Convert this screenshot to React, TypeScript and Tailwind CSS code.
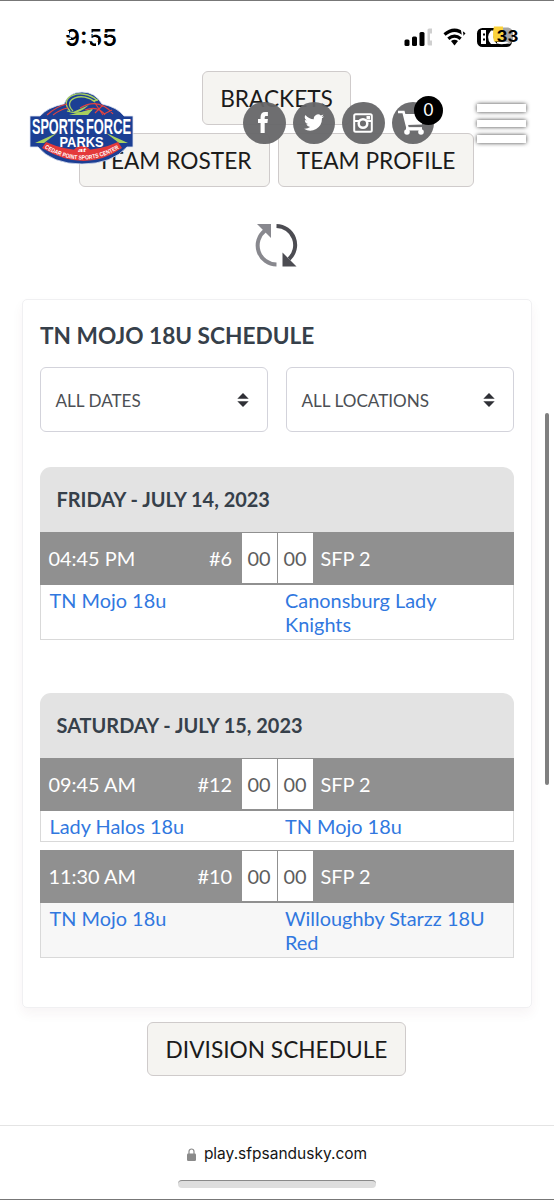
import React from "react";

type Game = {
  time: string;
  num: string;
  home: string;
  away: string;
  field: string;
  shaded?: boolean;
  tall?: boolean;
};

const friday: Game[] = [
  { time: "04:45 PM", num: "#6", home: "TN Mojo 18u", away: "Canonsburg Lady Knights", field: "SFP 2", tall: true },
];

const saturday: Game[] = [
  { time: "09:45 AM", num: "#12", home: "Lady Halos 18u", away: "TN Mojo 18u", field: "SFP 2" },
  { time: "11:30 AM", num: "#10", home: "TN Mojo 18u", away: "Willoughby Starzz 18U Red", field: "SFP 2", shaded: true, tall: true },
];

function PageButton({ label, className }: { label: string; className: string }) {
  return (
    <button
      className={`flex h-[54px] shrink-0 items-center justify-center whitespace-nowrap rounded-[6px] border-[1.5px] border-[#cfcbcb] bg-[#f5f4f1] pt-[2px] text-[22.7px] leading-none text-[#1b1b1b] ${className}`}
    >
      {label}
    </button>
  );
}

function Select({ label }: { label: string }) {
  return (
    <div className="flex h-[65px] w-[228px] items-center justify-between rounded-[6px] border-[1.5px] border-[#d3d3db] bg-white pl-[15px] pr-[18px] pt-[2px] text-[17.1px] text-[#4c4f54]">
      <span className="pt-px">{label}</span>
      <svg width="12" height="14" viewBox="0 0 12 14" className="mb-[2px]" fill="#2f3036">
        <path d="M6 0 11.7 5.8H.3z" />
        <path d="M6 14 .3 8.2h11.4z" />
      </svg>
    </div>
  );
}

function GameRow({ game }: { game: Game }) {
  return (
    <div>
      <div className="flex h-[53px] items-center bg-[#909090] text-[19.9px] text-white">
        <div className="flex w-[202px] items-center justify-between pl-[9px] pr-[9.5px]">
          <span>{game.time}</span>
          <span>{game.num}</span>
        </div>
        <div className="mb-px flex h-[50px] w-[35px] items-center justify-center bg-white pt-px text-[#5e5e5e]">00</div>
        <div className="mb-px ml-px flex h-[50px] w-[35px] items-center justify-center bg-white pt-px text-[#5e5e5e]">00</div>
        <span className="pl-[8px]">{game.field}</span>
      </div>
      <div
        className={`flex border border-t-0 border-[#d9d9d9] pl-[9px] pt-[3px] text-[19.9px] leading-[24px] text-[#3178df] ${game.tall ? "h-[55px]" : "h-[31px]"} ${game.shaded ? "bg-[#f7f7f7]" : "bg-white"}`}
      >
        <span className="w-[235.5px]">{game.home}</span>
        <span className="w-[215px]">{game.away}</span>
      </div>
    </div>
  );
}

function Day({ title, games }: { title: string; games: Game[] }) {
  return (
    <section>
      <h3 className="flex h-[65px] items-center rounded-t-[11px] bg-[#e3e3e3] pl-[17px] text-[19.95px] font-bold text-[#36404a]">
        {title}
      </h3>
      <div className="flex flex-col gap-[8px]">
        {games.map((g) => (
          <GameRow key={g.time} game={g} />
        ))}
      </div>
    </section>
  );
}

function StatusBar() {
  return (
    <svg className="block h-[70px] w-[554px] shrink-0" viewBox="0 0 554 70">
      <text x="65" y="45" fontSize="23" fontWeight="600" fontFamily="Inter, sans-serif" textLength="52" lengthAdjust="spacingAndGlyphs">9:55</text>
      <g fill="#fff">
        <path d="M64 30h5v4h-5zM70 31h4v2h-4zM64 36.500h7v1.500h-7zM88 27h3.500v12h-3.500zM91 31.500h9v1.500h-9zM92 37h6v1.500h-6zM88 41h2v4h-2zM103 31.500h12v1.500h-12zM107 37h6v1.500h-6zM96 41h2v4h-2z" />
      </g>
      <g>
        <rect x="404.500" y="38.500" width="5" height="6.500" rx="1.500" />
        <rect x="412" y="35.500" width="5" height="9.500" rx="1.500" />
        <rect x="419.500" y="31" width="5" height="14" rx="1.500" />
        <path d="M427.500 29q0-1.500 1.500-1.500h3v5h-2v7h2v5h-3q-1.500 0-1.500-1.500z" fill="#cfcfcf" />
      </g>
      <g fill="none" stroke="#000" strokeWidth="3.200">
        <path d="M444.500 33.500Q454.500 25 464.500 33.500" />
        <path d="M448.300 37.800Q454.500 32.500 460.700 37.800" />
        <path d="M451 40 454.500 44.500l3.500-4.500q-3.500-2.600-7 0z" fill="#000" stroke="none" />
        <path d="m461.500 27 1.300 8" stroke="#fff" strokeWidth="1.600" />
      </g>
      <rect x="477" y="27" width="35" height="19" rx="5.500" />
      <path d="M502 26.500h6q5 1 5 6v7l-3 3.500h-8z" fill="#a5a5a5" />
      <path d="M481 29h5v14h-5zM491 29.500q-6 7 0 13.500h6q-7-7 0-13.500zM497 41h12q-5 3.500-12 1.500z" fill="#fff" />
      <path d="M483 32.500h2v2h-2zM483 37.500h2v2h-2z" />
      <path d="M494 25.500h9v15h-9q-2-8 0-15z" fill="#fbd23c" />
      <text x="496.500" y="40.500" fontSize="16.500" fontWeight="700" fontFamily="Inter, sans-serif" textLength="22" lengthAdjust="spacingAndGlyphs">33</text>
    </svg>
  );
}

function Logo() {
  return (
    <svg width="106" height="76" viewBox="0 0 106 76">
      <path d="M35 13Q40 1 53 1t20 12Q88 16 95 25h9v31h-6Q83 73 53 73 23 73 9 56H1V25h10q8-9 24-12z" fill="#1c3f94" stroke="#dfe4f2" strokeWidth="0.800" />
      <path d="M41 20C28 6 52-4 68 9M44 20C32 8 54 0 66 11M38 20q10 4 25-1M64 10l5-1" fill="none" stroke="#a8d05f" strokeWidth="1.300" />
      <path d="M18 24Q28 15 38 13M24 24q8-6 15-7M51 17q19-11 33 6M56 19q13-5 20 5M66 12l8 12M74 14l-8 8M83 19l-8 4" fill="none" stroke="#e4433e" strokeWidth="1.100" />
      <path d="M44 21 60 14q-9 8-16 8zM40 24l24-6-5 6z" fill="#a8d05f" />
      <path d="M6 52l22-10-13 10zM99 52l-22-10 13 10z" fill="#a8d05f" />
      <path d="M17 51Q53 67 89 51l4 6Q56 83 13 57z" fill="#e4393a" />
      <path d="M44 62q1-7 9-7t9 7z" fill="#e4393a" />
      <g fill="#fff" fontFamily="'Liberation Sans', sans-serif" fontWeight="700">
        <g fontSize="22.500">
          <text x="3" y="43" textLength="52" lengthAdjust="spacingAndGlyphs">SPORTS</text>
          <text x="57" y="43" textLength="45" lengthAdjust="spacingAndGlyphs">FORCE</text>
        </g>
        <text x="30.500" y="55.500" fontSize="15.500" textLength="44" lengthAdjust="spacingAndGlyphs">PARKS</text>
        <text x="49" y="61" fontSize="5" fontStyle="italic" textLength="8" lengthAdjust="spacingAndGlyphs">at</text>
        <path id="logo-arc" d="M15.500 57Q53 80 91 57" fill="none" />
        <text fontSize="6">
          <textPath href="#logo-arc" textLength="79" lengthAdjust="spacingAndGlyphs">CEDAR POINT SPORTS CENTER</textPath>
        </text>
      </g>
    </svg>
  );
}

function Round({ children }: { children: React.ReactNode }) {
  return <div className="flex h-[42.5px] w-[42.5px] items-center justify-center rounded-full bg-[#666668]/95">{children}</div>;
}

function FloatingHeader() {
  return (
    <>
      <div className="absolute left-[29px] top-[90px]">
        <Logo />
      </div>
      <div className="absolute left-[243px] top-[100.5px] flex gap-[7px]">
        <Round>
          <svg width="11" height="21" viewBox="0 0 12 21" className="mr-[2px]" fill="#fff" preserveAspectRatio="none"><path d="M2.800 21V11H0V7h2.800V5.200C2.800 1.700 4.600 0 7.800 0h3v4H9C7.700 4 7.300 4.500 7.300 5.700V7h3.500l-.5 4h-3v10z" /></svg>
        </Round>
        <Round>
          <svg width="20" height="17" viewBox="0 0 24 20" fill="#fff"><path d="M24 2.400a10 10 0 0 1-2.800.8A5 5 0 0 0 23.300.5a10 10 0 0 1-3.100 1.200 5 5 0 0 0-8.400 4.500A14 14 0 0 1 1.700 1a5 5 0 0 0 1.500 6.600A5 5 0 0 1 1 7a5 5 0 0 0 3.900 4.800 5 5 0 0 1-2.200.1 5 5 0 0 0 4.600 3.400A10 10 0 0 1 0 17.400 14 14 0 0 0 21.500 4.900 10 10 0 0 0 24 2.400z" /></svg>
        </Round>
        <Round>
          <svg width="20" height="20" viewBox="0 0 20 20">
            <rect x="1.200" y="1.200" width="17.600" height="17.600" rx="1.500" fill="none" stroke="#fff" strokeWidth="2" />
            <path d="M1 8h5M14 8h5" stroke="#fff" strokeWidth="2" />
            <circle cx="10" cy="10.500" r="4.300" fill="none" stroke="#fff" strokeWidth="2.500" />
            <rect x="13.500" y="3" width="3.500" height="3.500" fill="#fff" />
          </svg>
        </Round>
        <div className="relative">
          <Round>
            <svg width="27" height="25" viewBox="0 0 27 25" className="ml-[-3px]" fill="none" stroke="#fff">
              <path d="M0 2h5.500l4.200 16.500H24" strokeWidth="2.600" />
              <path d="M6 4h19l-1 10.500L9 15z" fill="#fff" stroke="none" />
              <g fill="#fff" stroke="none"><circle cx="9" cy="22" r="2.800" /><circle cx="23" cy="22" r="2.800" /><path d="M8 17.500h16v3H8z" /></g>
            </svg>
          </Round>
          <div className="absolute left-[22.500px] top-[-6px] flex h-[29px] w-[29px] items-center justify-center rounded-full bg-black text-[17px] text-white">0</div>
        </div>
      </div>
      <div className="absolute left-[476.5px] top-[103px] flex flex-col gap-[8px]">
        <i className="h-[7.600px] w-[49px] bg-white shadow-[0_0_4px_rgba(0,0,0,0.75)]" />
        <i className="h-[7.600px] w-[49px] bg-white shadow-[0_0_4px_rgba(0,0,0,0.75)]" />
        <i className="h-[7.600px] w-[49px] bg-white shadow-[0_0_4px_rgba(0,0,0,0.75)]" />
      </div>
    </>
  );
}

export default function App() {
  return (
    <div className="relative flex h-[1200px] w-[554px] flex-col overflow-hidden border-y border-[#777] bg-white font-['Lato',sans-serif]">
      <StatusBar />
      <div className="mr-px flex flex-col items-center gap-[8px]">
        <PageButton label="BRACKETS" className="w-[149px]" />
        <div className="flex gap-[8px]">
          <PageButton label="TEAM ROSTER" className="w-[191px]" />
          <PageButton label="TEAM PROFILE" className="w-[196px]" />
        </div>
      </div>
      <svg className="ml-[255px] mt-[36px] block h-[45px] w-[44px] shrink-0" viewBox="0 0 44 45">
        <path d="M21.500 41.500A19 19 0 0 1 10 7.500" fill="none" stroke="#88888e" strokeWidth="4" />
        <path d="M2 1h14v14z" fill="#88888e" />
        <path d="M21.500 3A19 19 0 0 1 34 36" fill="none" stroke="#4c4c52" strokeWidth="4" />
        <path d="M41.500 43.500h-14V29.500z" fill="#4c4c52" />
      </svg>
      <main className="ml-[21.500px] mt-[31px] h-[709px] w-[510px] shrink-0 rounded-[5px] border-[1.500px] border-[#f0f0f2] px-[17px] shadow-[0_6px_12px_rgba(90,40,60,0.05)]">
        <h2 className="mt-[23px] flex h-[26px] items-center pl-[0.5px] text-[22.65px] font-bold leading-none text-[#36404a]">TN MOJO 18U SCHEDULE</h2>
        <div className="mt-[18px] flex justify-between">
          <Select label="ALL DATES" />
          <Select label="ALL LOCATIONS" />
        </div>
        <div className="mt-[35px] flex flex-col gap-[53px]">
          <Day title="FRIDAY - JULY 14, 2023" games={friday} />
          <Day title="SATURDAY - JULY 15, 2023" games={saturday} />
        </div>
      </main>
      <div className="mr-px mt-[14px] flex justify-center">
        <PageButton label="DIVISION SCHEDULE" className="w-[259px]" />
      </div>
      <footer className="mt-[49px] flex flex-1 flex-col items-center border-t-[1.500px] border-[#e4e4e4]">
        <div className="mt-[16px] flex h-[24px] items-center gap-[8px] font-['Inter',sans-serif] text-[15.500px] text-[#151515]">
          <svg width="9" height="13" viewBox="0 0 9 13">
            <path d="M2 6V3.500a2.500 2.500 0 0 1 5 0V6" fill="none" stroke="#8a8a8a" strokeWidth="1.200" />
            <rect y="5.500" width="9" height="7.500" rx="1.300" fill="#8a8a8a" />
          </svg>
          <span>play.sfpsandusky.com</span>
        </div>
        <div className="mt-[14px] h-[8px] w-[198px] rounded-full border-t border-[#8a8a8a] bg-[#dedede]" />
      </footer>
      <div className="absolute left-[545px] top-[412px] h-[372px] w-[4px] rounded-full bg-[#808080]" />
      <FloatingHeader />
    </div>
  );
}
